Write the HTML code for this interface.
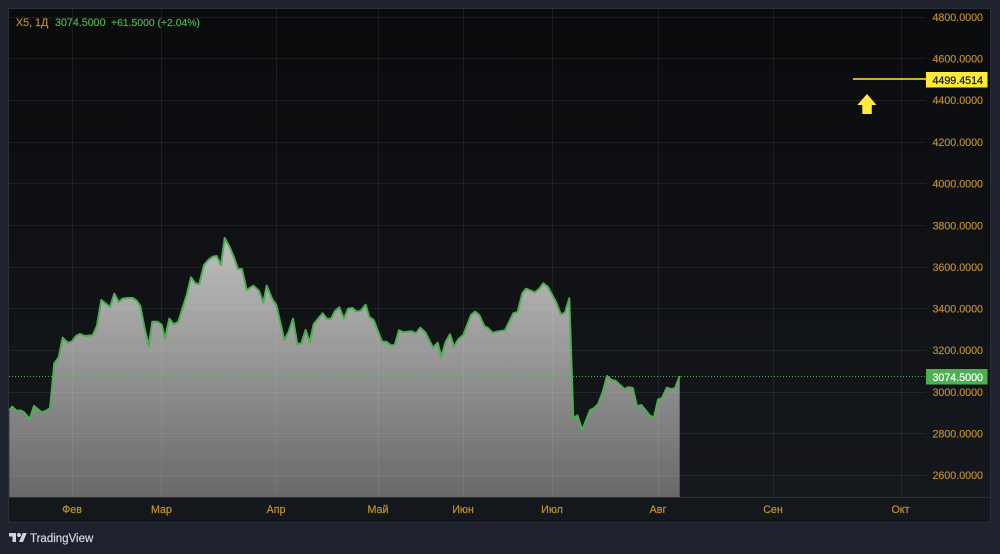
<!DOCTYPE html>
<html><head><meta charset="utf-8"><style>
html,body{margin:0;padding:0;width:1000px;height:554px;overflow:hidden;background:#1e222d}
svg{display:block;position:absolute;left:0;top:0}
text{font-family:"Liberation Sans",sans-serif;stroke:currentColor;stroke-width:.22px}
</style></head><body>
<svg width="1000" height="554" viewBox="0 0 1000 554" xmlns="http://www.w3.org/2000/svg">
<defs>
<linearGradient id="bg" x1="0" y1="0" x2="0" y2="1"><stop offset="0" stop-color="#0a0b0d"/><stop offset="1" stop-color="#15181d"/></linearGradient>
<linearGradient id="area" gradientUnits="userSpaceOnUse" x1="0" y1="238" x2="0" y2="497"><stop offset="0" stop-color="#bebebe"/><stop offset="1" stop-color="#69696a"/></linearGradient>
</defs>
<rect x="0" y="0" width="1000" height="554" fill="#1e222d"/>
<rect x="9" y="9" width="981" height="513" fill="url(#bg)"/>
<rect x="8.5" y="8.5" width="982" height="514" fill="none" stroke="#2a2e39"/>
<path id="a" fill="url(#area)" d="M9.3 497L9.3 410 12.3 406.7 16.7 411 20 410.3 24 412.3 29.7 419 34 406 41.7 412.3 45.7 411 50 408.3 54.3 363.3 58.7 357.3 62.7 337.7 67.7 342.7 71.7 341.7 76 336 80 334 85 336 92.7 335.3 97 325.7 101.3 300 110 307 114.3 293.7 118.7 302 122.7 298.7 127.3 298 132.7 298 136.7 300.7 140.3 306 144.3 326.7 148.7 346 152.3 321.7 157.3 321.7 161.7 324.7 165 338.3 169.3 318.7 173.7 324.3 178.3 321.7 186.7 295 191 277.3 195.3 283.3 199.3 284 204 265 208.3 260 212.7 256.7 216.7 256 221 265 224.7 238 230 247.7 234.3 258.3 238 269 242 269 246.7 290 253.3 285.7 259 290.7 263.3 302.7 266.7 285.7 272.3 299.3 276.3 305 284.3 340 288.7 331.7 293 318.7 297.3 344 301.3 343.3 305.7 330 309.7 342.3 313.7 324 322.7 313.3 326.7 318.7 331 319 335 311 339.3 307.3 344 318.7 348 308.7 352.3 308 356.7 311.7 360.7 310.7 365.7 304.7 369.3 317 373.7 320 382 341.7 386.3 341.7 390.7 345.3 394.7 345 399 330.3 403.3 332.3 411.7 331.3 416 333.3 420.3 327.7 425.3 332.3 433 347.7 437.7 342.7 441.3 356.7 445.7 341.7 450 334.3 454 346.7 458.3 339.3 463.3 335 471 315 475 311.7 479.3 315 484.3 326 488.3 328.3 492.7 332.7 496.7 331.7 505 330.3 513.3 313.3 517.7 312 522.3 293.3 526 288.7 535 292.3 539 289 543.3 283.3 547.7 286.7 556 301.7 560.7 314.3 565 312.7 569.3 298.3 573.3 418.3 577.3 415.3 582.3 430 590 410.3 594.3 408 598 404.3 602.7 392.3 607 376 611.7 380 615.7 381 624.3 389 628.3 387.3 632.7 388 637 406.3 641.3 405 650 415.7 654 417.3 658 399.7 662 398 666.7 387.7 670.7 389 675 388.3 679.7 376 679.7 497Z"/>
<g stroke="#fff" stroke-opacity=".07" stroke-width="1" fill="none">
<path d="M9 17.5H926M9 58.5H926M9 100.5H926M9 142.5H926M9 183.5H926M9 225.5H926M9 267.5H926M9 308.5H926M9 350.5H926M9 392.5H926M9 433.5H926M9 475.5H926"/>
<path d="M72.5 9V497M161.5 9V497M276.5 9V497M378.5 9V497M463.5 9V497M552.5 9V497M658.5 9V497M773.5 9V497M901.5 9V497"/>
</g>
<path fill="none" stroke="#4caf50" stroke-width="2" stroke-linejoin="round" d="M9.3 410 12.3 406.7 16.7 411 20 410.3 24 412.3 29.7 419 34 406 41.7 412.3 45.7 411 50 408.3 54.3 363.3 58.7 357.3 62.7 337.7 67.7 342.7 71.7 341.7 76 336 80 334 85 336 92.7 335.3 97 325.7 101.3 300 110 307 114.3 293.7 118.7 302 122.7 298.7 127.3 298 132.7 298 136.7 300.7 140.3 306 144.3 326.7 148.7 346 152.3 321.7 157.3 321.7 161.7 324.7 165 338.3 169.3 318.7 173.7 324.3 178.3 321.7 186.7 295 191 277.3 195.3 283.3 199.3 284 204 265 208.3 260 212.7 256.7 216.7 256 221 265 224.7 238 230 247.7 234.3 258.3 238 269 242 269 246.7 290 253.3 285.7 259 290.7 263.3 302.7 266.7 285.7 272.3 299.3 276.3 305 284.3 340 288.7 331.7 293 318.7 297.3 344 301.3 343.3 305.7 330 309.7 342.3 313.7 324 322.7 313.3 326.7 318.7 331 319 335 311 339.3 307.3 344 318.7 348 308.7 352.3 308 356.7 311.7 360.7 310.7 365.7 304.7 369.3 317 373.7 320 382 341.7 386.3 341.7 390.7 345.3 394.7 345 399 330.3 403.3 332.3 411.7 331.3 416 333.3 420.3 327.7 425.3 332.3 433 347.7 437.7 342.7 441.3 356.7 445.7 341.7 450 334.3 454 346.7 458.3 339.3 463.3 335 471 315 475 311.7 479.3 315 484.3 326 488.3 328.3 492.7 332.7 496.7 331.7 505 330.3 513.3 313.3 517.7 312 522.3 293.3 526 288.7 535 292.3 539 289 543.3 283.3 547.7 286.7 556 301.7 560.7 314.3 565 312.7 569.3 298.3 573.3 418.3 577.3 415.3 582.3 430 590 410.3 594.3 408 598 404.3 602.7 392.3 607 376 611.7 380 615.7 381 624.3 389 628.3 387.3 632.7 388 637 406.3 641.3 405 650 415.7 654 417.3 658 399.7 662 398 666.7 387.7 670.7 389 675 388.3 679.7 376"/>
<path d="M9 376.5H926" stroke="#4caf50" stroke-width="1" stroke-dasharray="1 2" fill="none"/>
<rect x="9" y="497" width="981" height="25" fill="#14171b"/>
<path d="M9 497.5H990" stroke="#2e3138" stroke-width="1"/>
<g fill="#b8892c" color="#b8892c" font-size="10.7" text-anchor="end">
<text x="983" y="21">4800.0000</text>
<text x="983" y="62.5">4600.0000</text>
<text x="983" y="104">4400.0000</text>
<text x="983" y="146">4200.0000</text>
<text x="983" y="187.5">4000.0000</text>
<text x="983" y="229.5">3800.0000</text>
<text x="983" y="271">3600.0000</text>
<text x="983" y="312.5">3400.0000</text>
<text x="983" y="354">3200.0000</text>
<text x="983" y="396">3000.0000</text>
<text x="983" y="437.5">2800.0000</text>
<text x="983" y="479">2600.0000</text>
</g>
<rect x="926" y="369" width="61.5" height="15.5" fill="#4caf50"/>
<text x="983" y="381" fill="#fff" color="#fff" font-size="10.7" text-anchor="end">3074.5000</text>
<path d="M853 79H926" stroke="#ffeb3b" stroke-width="1.5"/>
<rect x="926" y="72" width="61.5" height="15.5" fill="#ffeb3b"/>
<text x="983" y="84" fill="#131722" color="#131722" font-size="10.7" text-anchor="end">4499.4514</text>
<path d="M857.3 105L867 94 876.5 105H871.8V114H862.3V105Z" fill="#ffeb3b"/>
<g fill="#c0902c" color="#c0902c" font-size="10.7" text-anchor="middle">
<text x="72" y="513">Фев</text>
<text x="161.5" y="513">Мар</text>
<text x="276" y="513">Апр</text>
<text x="378" y="513">Май</text>
<text x="463" y="513">Июн</text>
<text x="552" y="513">Июл</text>
<text x="658" y="513">Авг</text>
<text x="773" y="513">Сен</text>
<text x="900.5" y="513">Окт</text>
</g>
<text x="16" y="26" fill="#b8892c" color="#b8892c" font-size="10.7">Х5, 1Д</text>
<text x="55" y="26" fill="#4caf50" color="#4caf50" font-size="10.7">3074.5000</text>
<text x="111" y="26" fill="#4caf50" color="#4caf50" font-size="10.4">+61.5000 (+2.04%)</text>
<g transform="translate(9,531) scale(.5)" fill="#d1d4dc">
<path d="M14 22H7V11H0V4h14v18zM28 22h-8l7.5-18h8L28 22z"/><circle cx="20" cy="8" r="4"/>
</g>
<text x="30" y="542" fill="#d1d4dc" color="#d1d4dc" font-size="11.5">TradingView</text>
</svg>
</body></html>
